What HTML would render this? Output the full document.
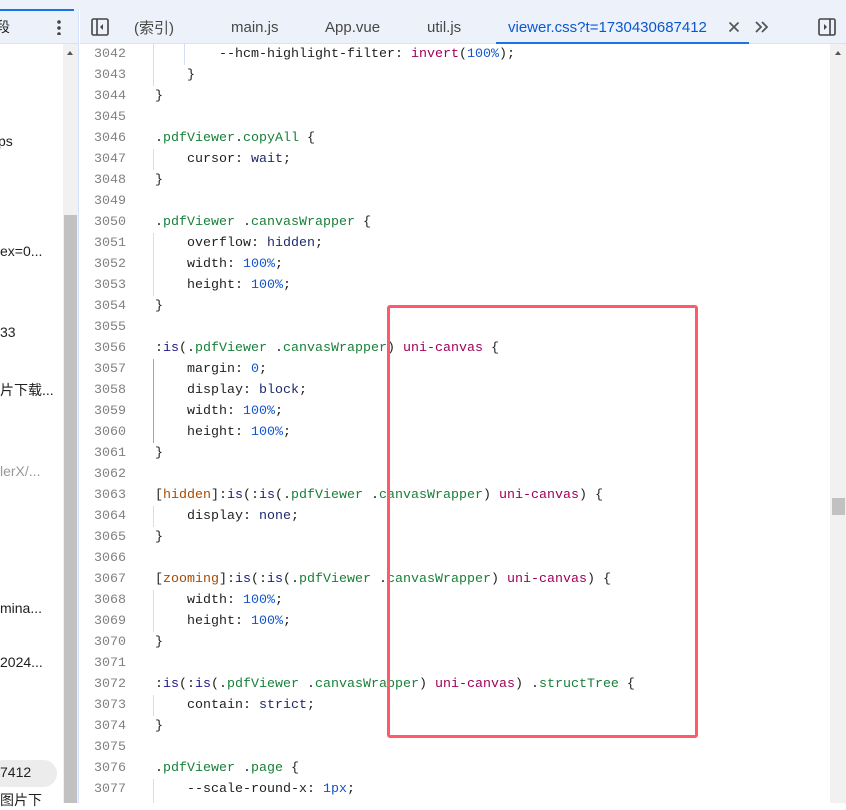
<!DOCTYPE html>
<html><head><meta charset="utf-8"><style>
*{margin:0;padding:0;box-sizing:border-box}
body{width:846px;height:803px;overflow:hidden;background:#fff;position:relative;font-family:"Liberation Sans","Noto Sans CJK SC",sans-serif}
.top{position:absolute;left:0;top:0;width:846px;height:10px;background:#edf2fa}
.blue{position:absolute;left:0;top:9px;width:74px;height:2px;background:#1a73e8}
.left{position:absolute;left:0;top:10px;width:79px;height:793px;background:#fff;border-right:1px solid #d3e3fd}
.lhead{position:absolute;left:0;top:10px;width:79px;height:34px;background:#edf2fa;border-bottom:1px solid #d3e3fd;border-right:1px solid #d3e3fd}
.li{position:absolute;left:0;font-size:14px;color:#1f1f1f;white-space:nowrap}
.sb{position:absolute;left:63px;top:44px;width:15px;height:759px;background:#f1f1f1}
.thumb{position:absolute;left:64px;top:215px;width:13px;height:588px;background:#c1c1c1}
.tabs{position:absolute;left:80px;top:10px;width:766px;height:34px;background:#edf2fa;border-bottom:1px solid #d3e3fd}
.tab{position:absolute;top:19px;font-size:15px;color:#474747;white-space:nowrap}
.code{position:absolute;left:80px;top:44px;width:750px;height:759px;font-family:"Liberation Mono",monospace;font-size:13.33px;color:#1f1f1f}
.ln{position:absolute;left:0;width:46px;text-align:right;color:#808080;height:21px;line-height:21px}
.tx{position:absolute;left:75px;white-space:pre;height:21px;line-height:21px}
.g{position:absolute;width:1px;background:#cfdff8}
.s{color:#188038}.k{color:#1a1a8a}.n{color:#1155cc}.p{color:#a0005a}.a{color:#a84a00}.v{color:#1f2a6b}
.vsb{position:absolute;left:830px;top:44px;width:16px;height:759px;background:#f1f1f1}
.red{position:absolute;left:387px;top:305px;width:311px;height:433px;border:3px solid #ff5a6a;border-radius:3px}
</style></head><body>
<div class="top"></div>
<div class="left"></div>
<div class="lhead"></div>
<div class="blue"></div>
<div class="li" style="top:17px;left:-4px">段</div>
<div style="position:absolute;left:57px;top:19px;width:4px;height:16px;background:radial-gradient(circle,#444 1.6px,transparent 2px) 0 0/4px 6px repeat-y"></div>
<div class="sb"></div><div class="thumb"></div>
<div style="position:absolute;left:67px;top:51px;border:3.5px solid transparent;border-bottom:4px solid #555;border-top:0;width:0"></div>
<div class="li" style="top:133px;left:-2px">ps</div>
<div class="li" style="top:243px;left:0">ex=0...</div>
<div class="li" style="top:324px;left:0">33</div>
<div class="li" style="top:380px;left:0">片下载...</div>
<div class="li" style="top:463px;left:0;color:#999">lerX/...</div>
<div class="li" style="top:600px;left:0">mina...</div>
<div class="li" style="top:654px;left:0">2024...</div>
<div style="position:absolute;left:-10px;top:760px;width:67px;height:27px;border-radius:14px;background:#ececec"></div>
<div class="li" style="top:764px;left:0">7412</div>
<div class="li" style="top:790px;left:0">图片下</div>
<div class="tabs"></div>
<svg style="position:absolute;left:91px;top:18px" width="18" height="18" viewBox="0 0 18 18"><rect x="1" y="1" width="16" height="16" rx="1.5" fill="none" stroke="#444" stroke-width="1.6"/><line x1="6" y1="1" x2="6" y2="17" stroke="#444" stroke-width="1.6"/><path d="M12 6 L9 9 L12 12Z" fill="#444"/></svg>
<div class="tab" style="left:134px;top:17px">(索引)</div>
<div class="tab" style="left:231px">main.js</div>
<div class="tab" style="left:325px">App.vue</div>
<div class="tab" style="left:427px">util.js</div>
<div class="tab" style="left:508px;color:#0b57d0">viewer.css?t=1730430687412</div>
<div style="position:absolute;left:496px;top:42px;width:253px;height:2px;background:#1a73e8"></div>
<svg style="position:absolute;left:728px;top:21px" width="12" height="12" viewBox="0 0 12 12"><path d="M1.5 1.5 L10.5 10.5 M10.5 1.5 L1.5 10.5" stroke="#555" stroke-width="1.7"/></svg>
<svg style="position:absolute;left:754px;top:20px" width="16" height="14" viewBox="0 0 16 14"><path d="M2 2 L7 7 L2 12 M8 2 L13 7 L8 12" fill="none" stroke="#555" stroke-width="1.8"/></svg>
<svg style="position:absolute;left:818px;top:18px" width="18" height="18" viewBox="0 0 18 18"><rect x="1" y="1" width="16" height="16" rx="1.5" fill="none" stroke="#444" stroke-width="1.6"/><line x1="12" y1="1" x2="12" y2="17" stroke="#444" stroke-width="1.6"/><path d="M6 6 L9 9 L6 12Z" fill="#444"/></svg>
<div class="code">
<div class="g" style="left:73px;top:0;height:42px"></div>
<div class="g" style="left:104px;top:0;height:21px"></div>
<div class="g" style="left:73px;top:105px;height:21px"></div>
<div class="g" style="left:73px;top:189px;height:63px"></div>
<div class="g" style="left:73px;top:315px;height:84px;background:#7baaf7"></div>
<div class="g" style="left:73px;top:462px;height:21px"></div>
<div class="g" style="left:73px;top:546px;height:42px"></div>
<div class="g" style="left:73px;top:651px;height:21px"></div>
<div class="g" style="left:73px;top:735px;height:24px"></div>
<div class="ln" style="top:0">3042</div><div class="tx" style="top:0">        --hcm-highlight-filter: <span class="p">invert</span>(<span class="n">100%</span>);</div>
<div class="ln" style="top:21px">3043</div><div class="tx" style="top:21px">    }</div>
<div class="ln" style="top:42px">3044</div><div class="tx" style="top:42px">}</div>
<div class="ln" style="top:63px">3045</div>
<div class="ln" style="top:84px">3046</div><div class="tx" style="top:84px">.<span class="s">pdfViewer</span>.<span class="s">copyAll</span> {</div>
<div class="ln" style="top:105px">3047</div><div class="tx" style="top:105px">    cursor: <span class="v">wait</span>;</div>
<div class="ln" style="top:126px">3048</div><div class="tx" style="top:126px">}</div>
<div class="ln" style="top:147px">3049</div>
<div class="ln" style="top:168px">3050</div><div class="tx" style="top:168px">.<span class="s">pdfViewer</span> .<span class="s">canvasWrapper</span> {</div>
<div class="ln" style="top:189px">3051</div><div class="tx" style="top:189px">    overflow: <span class="v">hidden</span>;</div>
<div class="ln" style="top:210px">3052</div><div class="tx" style="top:210px">    width: <span class="n">100%</span>;</div>
<div class="ln" style="top:231px">3053</div><div class="tx" style="top:231px">    height: <span class="n">100%</span>;</div>
<div class="ln" style="top:252px">3054</div><div class="tx" style="top:252px">}</div>
<div class="ln" style="top:273px">3055</div>
<div class="ln" style="top:294px">3056</div><div class="tx" style="top:294px">:<span class="k">is</span>(.<span class="s">pdfViewer</span> .<span class="s">canvasWrapper</span>) <span class="p">uni-canvas</span> {</div>
<div class="ln" style="top:315px">3057</div><div class="tx" style="top:315px">    margin: <span class="n">0</span>;</div>
<div class="ln" style="top:336px">3058</div><div class="tx" style="top:336px">    display: <span class="v">block</span>;</div>
<div class="ln" style="top:357px">3059</div><div class="tx" style="top:357px">    width: <span class="n">100%</span>;</div>
<div class="ln" style="top:378px">3060</div><div class="tx" style="top:378px">    height: <span class="n">100%</span>;</div>
<div class="ln" style="top:399px">3061</div><div class="tx" style="top:399px">}</div>
<div class="ln" style="top:420px">3062</div>
<div class="ln" style="top:441px">3063</div><div class="tx" style="top:441px">[<span class="a">hidden</span>]:<span class="k">is</span>(:<span class="k">is</span>(.<span class="s">pdfViewer</span> .<span class="s">canvasWrapper</span>) <span class="p">uni-canvas</span>) {</div>
<div class="ln" style="top:462px">3064</div><div class="tx" style="top:462px">    display: <span class="v">none</span>;</div>
<div class="ln" style="top:483px">3065</div><div class="tx" style="top:483px">}</div>
<div class="ln" style="top:504px">3066</div>
<div class="ln" style="top:525px">3067</div><div class="tx" style="top:525px">[<span class="a">zooming</span>]:<span class="k">is</span>(:<span class="k">is</span>(.<span class="s">pdfViewer</span> .<span class="s">canvasWrapper</span>) <span class="p">uni-canvas</span>) {</div>
<div class="ln" style="top:546px">3068</div><div class="tx" style="top:546px">    width: <span class="n">100%</span>;</div>
<div class="ln" style="top:567px">3069</div><div class="tx" style="top:567px">    height: <span class="n">100%</span>;</div>
<div class="ln" style="top:588px">3070</div><div class="tx" style="top:588px">}</div>
<div class="ln" style="top:609px">3071</div>
<div class="ln" style="top:630px">3072</div><div class="tx" style="top:630px">:<span class="k">is</span>(:<span class="k">is</span>(.<span class="s">pdfViewer</span> .<span class="s">canvasWrapper</span>) <span class="p">uni-canvas</span>) .<span class="s">structTree</span> {</div>
<div class="ln" style="top:651px">3073</div><div class="tx" style="top:651px">    contain: <span class="v">strict</span>;</div>
<div class="ln" style="top:672px">3074</div><div class="tx" style="top:672px">}</div>
<div class="ln" style="top:693px">3075</div>
<div class="ln" style="top:714px">3076</div><div class="tx" style="top:714px">.<span class="s">pdfViewer</span> .<span class="s">page</span> {</div>
<div class="ln" style="top:735px">3077</div><div class="tx" style="top:735px">    --scale-round-x: <span class="n">1px</span>;</div>
</div>
<div class="vsb"></div>
<div style="position:absolute;left:835px;top:51px;border:3.5px solid transparent;border-bottom:4px solid #555;border-top:0;width:0"></div>
<div style="position:absolute;left:832px;top:498px;width:13px;height:17px;background:#c1c1c1"></div>
<div class="red"></div>
</body></html>
